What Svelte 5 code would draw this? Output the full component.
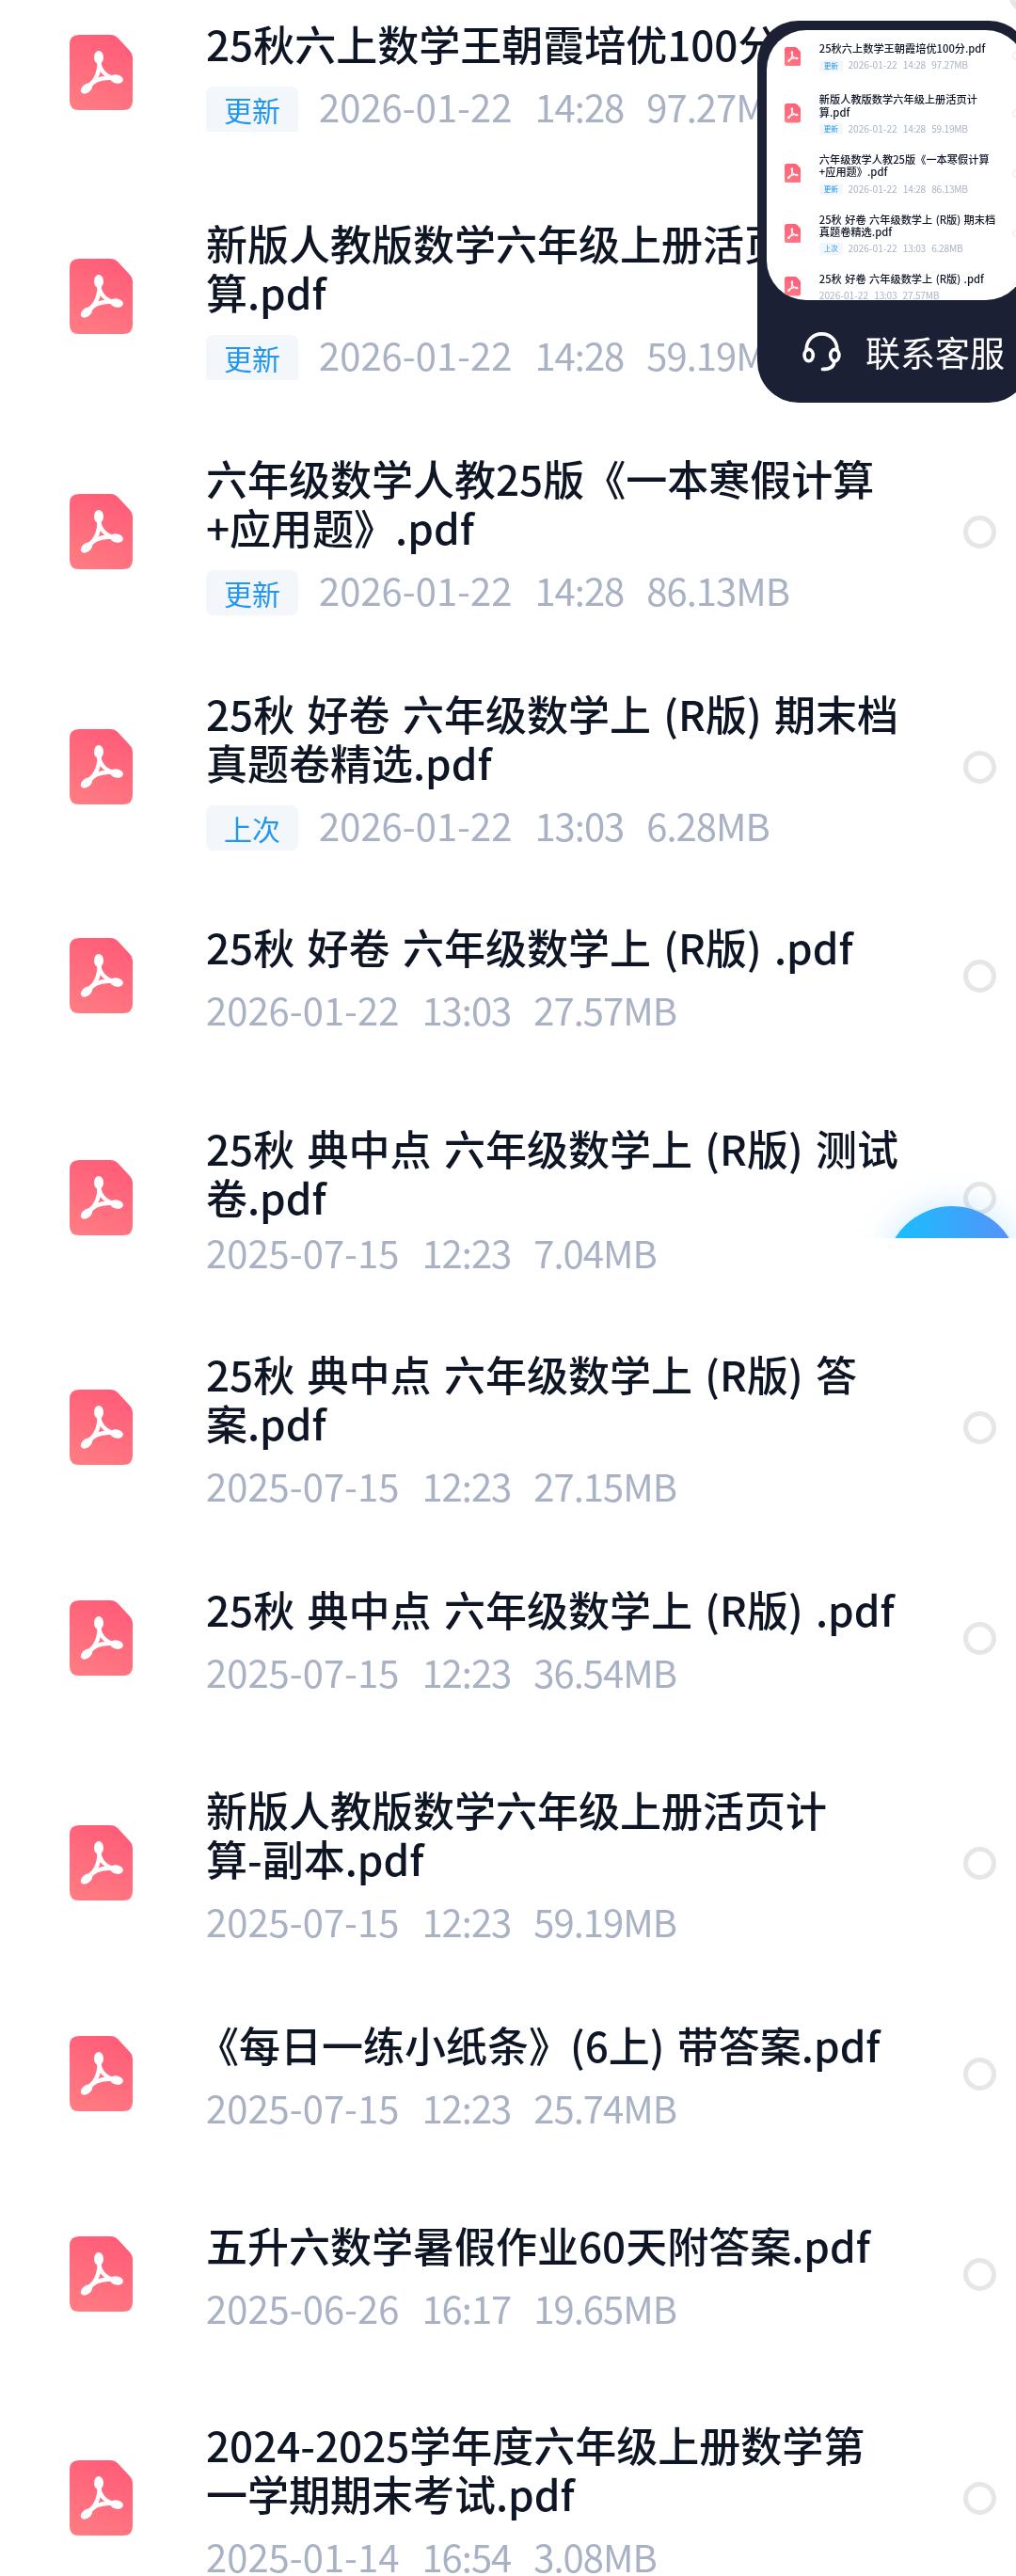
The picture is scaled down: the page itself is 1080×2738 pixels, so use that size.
<script>
  const rows = [
    { lines: ['25秋六上数学王朝霞培优100分.pdf'], tag: '更新', date: '2026-01-22', time: '14:28', size: '97.27MB', gap: 96, flat: true },
    { lines: ['新版人教版数学六年级上册活页计', '算.pdf'], tag: '更新', date: '2026-01-22', time: '14:28', size: '59.19MB', gap: 82, flat: true },
    { lines: ['六年级数学人教25版《一本寒假计算', '+应用题》.pdf'], tag: '更新', date: '2026-01-22', time: '14:28', size: '86.13MB', gap: 82 },
    { lines: ['25秋 好卷 六年级数学上 (R版) 期末档', '真题卷精选.pdf'], tag: '上次', date: '2026-01-22', time: '13:03', size: '6.28MB', gap: 80 },
    { lines: ['25秋 好卷 六年级数学上 (R版) .pdf'], date: '2026-01-22', time: '13:03', size: '27.57MB', gap: 98 },
    { lines: ['25秋 典中点 六年级数学上 (R版) 测试', '卷.pdf'], date: '2025-07-15', time: '12:23', size: '7.04MB', gap: 80, cut: true },
    { lines: ['25秋 典中点 六年级数学上 (R版) 答', '案.pdf'], date: '2025-07-15', time: '12:23', size: '27.15MB', gap: 82 },
    { lines: ['25秋 典中点 六年级数学上 (R版) .pdf'], date: '2025-07-15', time: '12:23', size: '36.54MB', gap: 97 },
    { lines: ['新版人教版数学六年级上册活页计', '算-副本.pdf'], date: '2025-07-15', time: '12:23', size: '59.19MB', gap: 82 },
    { lines: ['《每日一练小纸条》(6上) 带答案.pdf'], date: '2025-07-15', time: '12:23', size: '25.74MB', gap: 97, hang: true },
    { lines: ['五升六数学暑假作业60天附答案.pdf'], date: '2025-06-26', time: '16:17', size: '19.65MB', gap: 96 },
    { lines: ['2024-2025学年度六年级上册数学第', '一学期期末考试.pdf'], date: '2025-01-14', time: '16:54', size: '3.08MB', gap: 0 }
  ];
  const miniRows = rows.slice(0, 5);
</script>

{#snippet row(r)}
  <div class="row" style="padding-bottom:{r.gap}px">
    <svg class="icon" viewBox="0 0 67 80" aria-hidden="true">
      <path d="M10 0H44Q48 0 51 3L64 17Q67 20 67 24V70Q67 80 57 80H10Q0 80 0 70V10Q0 0 10 0Z" fill="url(#pdfGrad)" />
      <g fill="none" stroke="#fff" stroke-width="4.4" stroke-linecap="round">
        <path d="M31 23C33 36 30 48 18 57" />
        <path d="M31 23C30 35 36 45 51 47" />
        <path d="M18 57C26 47 38 44 51 47" />
      </g>
      <g fill="#fff">
        <ellipse cx="31" cy="24" rx="5" ry="7" />
        <ellipse cx="18" cy="57" rx="7" ry="4.6" transform="rotate(-38 18 57)" />
        <ellipse cx="50" cy="47" rx="7" ry="4.6" transform="rotate(12 50 47)" />
      </g>
    </svg>
    <div class="body">
      <div class="title" class:hang={r.hang}>
        {#each r.lines as line}<div>{line}</div>{/each}
      </div>
      <div class="meta" class:cut={r.cut}>
        {#if r.tag}<span class="tag" class:flat={r.flat}>{r.tag}</span>{/if}
        <span>{r.date}</span><span class="time">{r.time}</span><span class="size">{r.size}</span>
      </div>
    </div>
    <span class="radio"></span>
  </div>
{/snippet}

<div class="page">
  <svg class="defs" width="0" height="0" aria-hidden="true">
    <defs>
      <linearGradient id="pdfGrad" x1="0.7" y1="0" x2="0.3" y2="1">
        <stop offset="0" stop-color="#ff5c78" />
        <stop offset="1" stop-color="#ff7a82" />
      </linearGradient>
    </defs>
  </svg>

  <div class="list">
    {#each rows as r}{@render row(r)}{/each}
  </div>

  <span class="edge-ring"></span>

  <div class="fab-clip"><div class="fab"></div></div>

  <div class="float">
    <div class="preview">
      <div class="mini">
        {#each miniRows as r}{@render row(r)}{/each}
      </div>
    </div>
    <div class="service">
      <svg class="headset" viewBox="0 0 40 42" aria-hidden="true">
        <g fill="none" stroke="#fff" stroke-width="3.6" stroke-linecap="round">
          <path d="M4 20C4 -3 36 -3 36 20" />
          <ellipse cx="6.5" cy="25" rx="4.5" ry="6" />
          <ellipse cx="33.5" cy="25" rx="4.5" ry="6" />
          <path d="M33 31C33 37 28 39.5 21 39.5" />
        </g>
      </svg>
      <span>联系客服</span>
    </div>
  </div>
</div>

<style>
  :global(body) {
    margin: 0;
    background: #fff;
  }
  .page {
    position: relative;
    width: 1080px;
    height: 2738px;
    overflow: hidden;
    background: #fff;
    font-family: "Noto Sans CJK SC", "Noto Sans", sans-serif;
    filter: blur(0.5px);
  }
  .defs {
    position: absolute;
  }
  .list {
    padding-top: 20px;
  }
  .row {
    display: flex;
    align-items: center;
    padding-left: 74px;
    padding-right: 21px;
    width: 1080px;
    box-sizing: border-box;
  }
  .icon {
    flex: none;
    width: 67px;
    height: 80px;
    margin-right: 78px;
    margin-bottom: 2px;
  }
  .body {
    flex: 1;
    min-width: 0;
    white-space: nowrap;
  }
  .title {
    font-size: 44px;
    line-height: 52px;
    font-weight: 500;
    word-spacing: 3.5px;
    color: #0e1524;
  }
  .title.hang {
    text-indent: -9px;
  }
  .meta {
    display: flex;
    align-items: center;
    gap: 24px;
    height: 44px;
    margin-top: 19px;
    margin-bottom: 1px;
    font-size: 40px;
    color: #a9b2c4;
  }
  .meta.cut {
    margin-top: 11px;
  }
  .time {
    letter-spacing: -1px;
  }
  .size {
    letter-spacing: -1px;
  }
  .tag {
    flex: none;
    width: 98px;
    height: 48px;
    line-height: 48px;
    margin-top: 6px;
    margin-right: -2px;
    text-align: center;
    font-size: 30px;
    color: #2196ee;
    background: #f3f6fb;
    border-radius: 8px;
  }
  .tag.flat {
    border-radius: 8px 8px 0 0;
  }
  .radio {
    flex: none;
    width: 35px;
    height: 35px;
    box-sizing: border-box;
    border: 5px solid #e6e6e6;
    border-radius: 50%;
    margin-bottom: 2px;
  }
  .edge-ring {
    position: absolute;
    left: 1072px;
    top: -26px;
    width: 40px;
    height: 40px;
    box-sizing: border-box;
    border: 6px solid #e6e6e6;
    border-radius: 50%;
  }
  .fab-clip {
    position: absolute;
    left: 880px;
    top: 1200px;
    width: 200px;
    height: 116px;
    overflow: hidden;
  }
  .fab {
    position: absolute;
    left: 61px;
    top: 82px;
    width: 142px;
    height: 142px;
    border-radius: 50%;
    background: linear-gradient(90deg, #14c3ff, #5a8ef8);
    box-shadow: 0 0 36px rgba(70, 175, 255, 0.28);
  }
  .float {
    position: absolute;
    left: 805px;
    top: 22px;
    width: 290px;
    height: 406px;
    background: #1b2035;
    border-radius: 44px;
  }
  .preview {
    position: absolute;
    left: 10px;
    top: 10px;
    width: 275px;
    height: 287px;
    overflow: hidden;
    background: #fff;
    border-radius: 42px;
  }
  .mini {
    zoom: 0.255;
    padding-top: 52px;
  }
  .service {
    position: absolute;
    left: 48px;
    top: 297px;
    height: 109px;
    display: flex;
    align-items: center;
    gap: 26px;
    color: #fff;
    font-size: 37px;
    white-space: nowrap;
  }
  .headset {
    width: 41px;
    height: 43px;
  }
</style>
